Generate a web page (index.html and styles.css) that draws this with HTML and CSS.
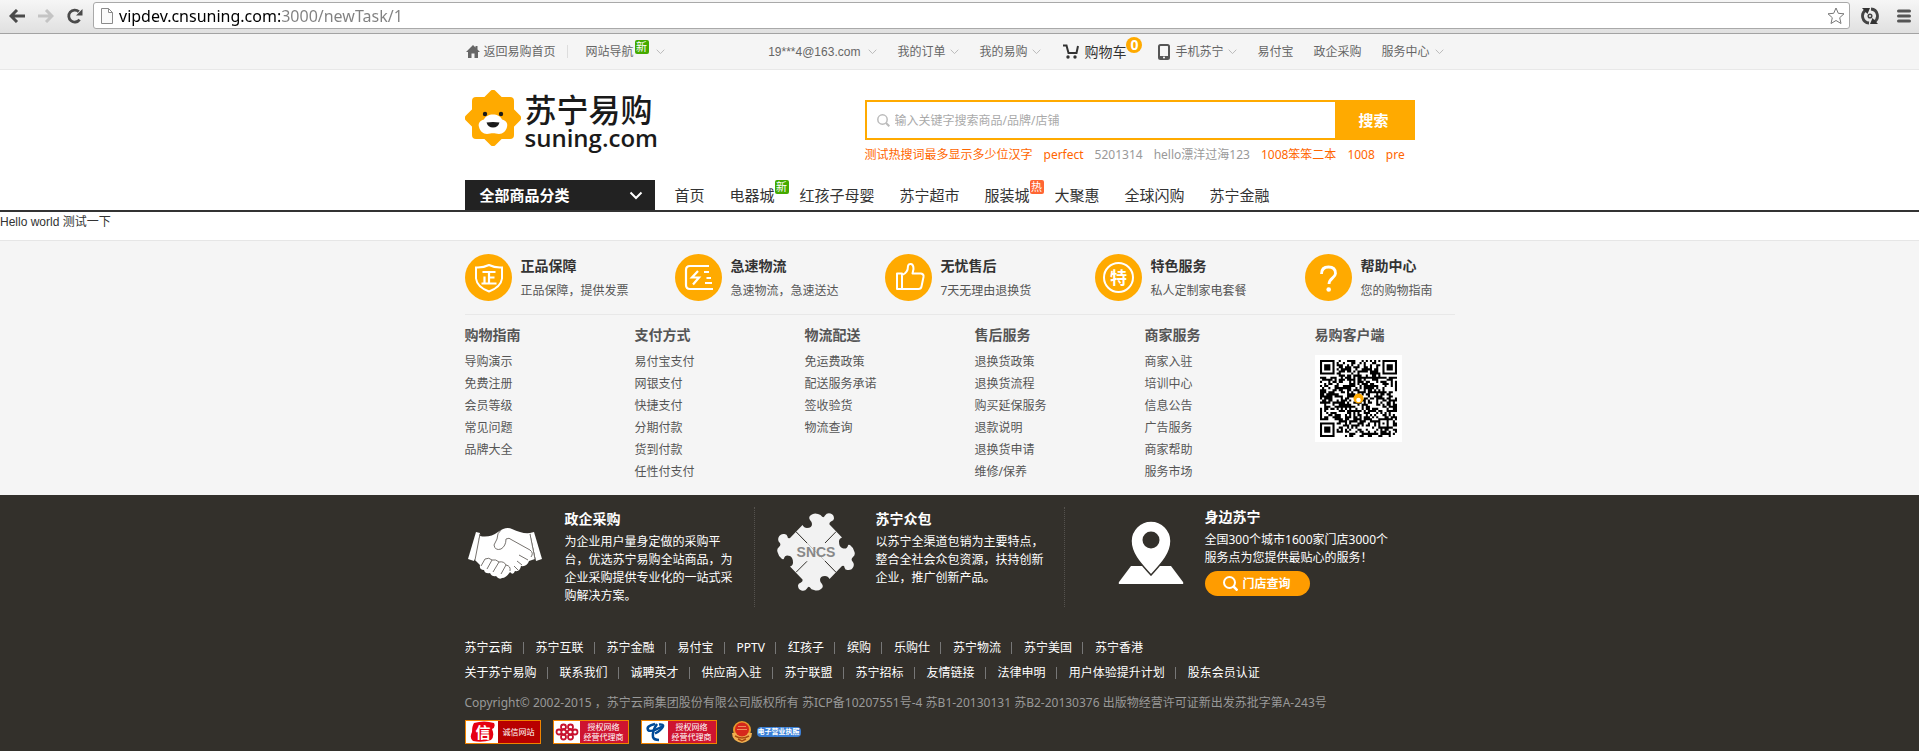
FILE: index.html
```html
<!DOCTYPE html>
<html lang="zh-CN">
<head>
<meta charset="utf-8">
<title>苏宁易购</title>
<link rel="stylesheet" href="styles.css">
</head>
<body>
<svg class="defs" aria-hidden="true">
  <symbol id="chev" viewBox="0 0 9 6"><path d="M.7.7 4.5 4.6 8.3.7" fill="none" stroke="currentColor"/></symbol>
</svg>

<div class="browser">
  <button class="tool" aria-label="后退"><svg width="16" height="14" viewBox="0 0 16 14"><path d="M8 1 2 7l6 6M2 7h14" fill="none" stroke="#4a4a4a" stroke-width="3"/></svg></button>
  <button class="tool" aria-label="前进"><svg width="16" height="14" viewBox="0 0 16 14"><path d="m8 1 6 6-6 6M14 7H0" fill="none" stroke="#c4c4c4" stroke-width="3"/></svg></button>
  <button class="tool" aria-label="刷新"><svg width="16" height="16" viewBox="0 0 16 16"><path d="M12.6 11.6A6 6 0 1 1 11.800 3.600" fill="none" stroke="#4a4a4a" stroke-width="2.800"/><path d="M15.500 1v6.500H9z" fill="#4a4a4a"/></svg></button>
  <div class="address">
    <svg width="12" height="16" viewBox="0 0 12 16"><path d="M.5.5h7l4 4v11H.5zM7.500.5v4h4" fill="#fafafa" stroke="#8a8a8a"/></svg>
    <input class="url" type="text" aria-label="地址" value="vipdev.cnsuning.com:3000/newTask/1">
    <button class="star" aria-label="收藏"><svg width="18" height="18" viewBox="0 0 18 18"><path d="m9 1 2.300 5.300 5.700.5-4.300 3.900 1.300 5.800L9 13.500l-5 3 1.300-5.800L1 6.800l5.700-.5z" fill="#fff" stroke="#777" stroke-linejoin="round"/></svg></button>
  </div>
  <button class="tool" aria-label="扩展"><svg width="18" height="18" viewBox="0 0 18 18"><g fill="none" stroke="#444" stroke-width="2.800"><path d="M8 16A7 7 0 0 1 5 3"/><path d="M10 2a7 7 0 0 1 3 13"/><circle cx="9" cy="9" r="1.800" stroke-width="1.500"/></g><path d="M1 1h8L6.500 7zM17 17H9l2.500-6z" fill="#333"/></svg></button>
  <button class="tool" aria-label="菜单"><svg width="14" height="14" viewBox="0 0 14 14"><path d="M1.500 2h11M1.500 7h11M1.500 12h11" stroke="#555" stroke-width="3" stroke-linecap="round"/></svg></button>
</div>

<div class="topbar">
  <div class="wrap topbar-in">
    <a class="top-item home" href="#"><svg width="14" height="13" viewBox="0 0 14 13"><path d="M7 0 0 7h2v6h3.500V8.500h3V13H12V7h2l-2.500-2.500V1h-2v1.500z" fill="#666"/></svg>返回易购首页</a>
    <a class="top-item site" href="#">网站导航<span class="tag new">新</span><svg class="chev" width="9" height="6"><use href="#chev"/></svg></a>
    <nav class="top-right">
      <a class="top-item mail" href="#">19***4@163.com<svg class="chev" width="9" height="6"><use href="#chev"/></svg></a>
      <a class="top-item" href="#">我的订单<svg class="chev" width="9" height="6"><use href="#chev"/></svg></a>
      <a class="top-item" href="#">我的易购<svg class="chev" width="9" height="6"><use href="#chev"/></svg></a>
      <a class="top-item cart" href="#"><svg width="16" height="15" viewBox="0 0 16 15"><path d="M0 1.500h3.500l2 7.500h8L15 2" fill="none" stroke="#333" stroke-width="2"/><circle cx="5" cy="13" r="1.700" fill="#333"/><circle cx="12" cy="13" r="1.700" fill="#333"/></svg>购物车<span class="count">0</span></a>
      <a class="top-item phone" href="#"><svg width="12" height="16" viewBox="0 0 12 16"><rect x="1" y="1" width="10" height="14" rx="1.500" fill="#f5f5f5" stroke="#555" stroke-width="2"/><path d="M1 12h10v3H1z" fill="#555"/><circle cx="6" cy="13.500" r="1" fill="#fff"/></svg>手机苏宁<svg class="chev" width="9" height="6"><use href="#chev"/></svg></a>
      <a class="top-item" href="#">易付宝</a>
      <a class="top-item" href="#">政企采购</a>
      <a class="top-item" href="#">服务中心<svg class="chev" width="9" height="6"><use href="#chev"/></svg></a>
    </nav>
  </div>
</div>

<header class="header">
  <div class="wrap head-row">
    <a class="logo" href="#">
      <svg width="56" height="56" viewBox="0 0 56 56"><g fill="#fa0"><rect x="7" y="7" width="42" height="42" rx="4"/><rect x="7" y="7" width="42" height="42" rx="4" transform="rotate(45 28 28)"/></g><path d="M28 24.500c4 0 8 2 9 5 4.500 1 6 4.500 5 7.500-1 4-4 7-8 7-2.500 0-4-.7-6-.7s-3.500.7-6 .7c-4 0-7-3-8-7-1-3 .5-6.500 5-7.500 1-3 5-5 9-5z" fill="#fff"/><circle cx="20" cy="24" r="2.200" fill="#1a1a1a"/><circle cx="36" cy="24" r="2.200" fill="#1a1a1a"/><path d="M21.500 32.500q6.500-1 13 0-1.500 5-6.500 5t-6.500-5z" fill="#1a1a1a"/></svg>
      <span class="logo-text"><span class="logo-cn">苏宁易购</span><span class="logo-en">suning.com</span></span>
    </a>
    <div class="search-area">
      <form class="search">
        <svg width="13" height="13" viewBox="0 0 13 13"><circle cx="5.500" cy="5.500" r="4.700" fill="none" stroke="#bbb" stroke-width="1.500"/><path d="m9 9 3.300 3.300" stroke="#bbb" stroke-width="2"/></svg>
        <input type="text" aria-label="搜索" placeholder="输入关键字搜索商品/品牌/店铺">
        <button type="button">搜索</button>
      </form>
      <div class="hot"><a class="on" href="#">测试热搜词最多显示多少位汉字</a><a class="on" href="#">perfect</a><a href="#">5201314</a><a href="#">hello漂洋过海123</a><a class="on" href="#">1008笨笨二本</a><a class="on" href="#">1008</a><a class="on" href="#">pre</a></div>
    </div>
  </div>
  <div class="wrap nav-row">
    <button class="category">全部商品分类<svg width="14" height="9" viewBox="0 0 14 9"><path d="m1.500 1.500 5.500 5.500 5.500-5.500" fill="none" stroke="#fff" stroke-width="2"/></svg></button>
    <nav class="nav">
      <a href="#">首页</a><a href="#">电器城<span class="tag new">新</span></a><a href="#">红孩子母婴</a><a href="#">苏宁超市</a><a href="#">服装城<span class="tag hot-tag">热</span></a><a href="#">大聚惠</a><a href="#">全球闪购</a><a href="#">苏宁金融</a>
    </nav>
  </div>
</header>

<main class="content">Hello world 测试一下</main>

<section class="help">
  <div class="wrap">
    <div class="promises">
      <div class="promise"><svg width="47" height="47" viewBox="0 0 47 47"><circle cx="23.500" cy="23.500" r="23.500" fill="#fa0"/><g fill="none" stroke="#fff" stroke-width="2"><path d="M24 11q-6 3-13 2.500v11Q12 33 24 37.500 36 33 37 24.500v-11Q30 14 24 11z"/><path d="M17.500 18h13M24 18v11.500M24 23.500h5.500M19.500 22.500v7M16.500 29.500h15" stroke-width="2.200"/></g></svg><div class="promise-text"><h3>正品保障</h3><p>正品保障，提供发票</p></div></div>
      <div class="promise"><svg width="47" height="47" viewBox="0 0 47 47"><circle cx="23.500" cy="23.500" r="23.500" fill="#fa0"/><g fill="none" stroke="#fff" stroke-width="2.200"><path d="M34 12H15q-4 0-4 4v15q0 4 4 4h23M29 18h5M31.500 24H36M30 29h7"/><path d="m23 17-6 6.500h7l-6 7"/></g></svg><div class="promise-text"><h3>急速物流</h3><p>急速物流，急速送达</p></div></div>
      <div class="promise"><svg width="47" height="47" viewBox="0 0 47 47"><circle cx="23.500" cy="23.500" r="23.500" fill="#fa0"/><g fill="none" stroke="#fff" stroke-width="2" stroke-linejoin="round"><path d="M12 19.500h5V35h-5zM17 21q6-2 6-9 .5-2.500 3-2t2.500 5l-1 4.500H36q3 .5 2.500 3.500l-2 9.500q-.5 2.500-3 2.500H17"/></g></svg><div class="promise-text"><h3>无忧售后</h3><p>7天无理由退换货</p></div></div>
      <div class="promise"><svg width="47" height="47" viewBox="0 0 47 47"><circle cx="23.500" cy="23.500" r="23.500" fill="#fa0"/><circle cx="23.500" cy="23.500" r="14.500" fill="none" stroke="#fff" stroke-width="2"/><text class="te" x="23.500" y="30" text-anchor="middle">特</text></svg><div class="promise-text"><h3>特色服务</h3><p>私人定制家电套餐</p></div></div>
      <div class="promise"><svg width="47" height="47" viewBox="0 0 47 47"><circle cx="23.500" cy="23.500" r="23.500" fill="#fa0"/><path d="M16.500 20q0-7 7-7t7 6.500c0 4-6.500 5-6.500 10.500" fill="none" stroke="#fff" stroke-width="2.800"/><circle cx="23.700" cy="35.500" r="2.300" fill="#fff"/></svg><div class="promise-text"><h3>帮助中心</h3><p>您的购物指南</p></div></div>
    </div>
    <div class="guides">
      <div><h4>购物指南</h4><a href="#">导购演示</a><a href="#">免费注册</a><a href="#">会员等级</a><a href="#">常见问题</a><a href="#">品牌大全</a></div>
      <div><h4>支付方式</h4><a href="#">易付宝支付</a><a href="#">网银支付</a><a href="#">快捷支付</a><a href="#">分期付款</a><a href="#">货到付款</a><a href="#">任性付支付</a></div>
      <div><h4>物流配送</h4><a href="#">免运费政策</a><a href="#">配送服务承诺</a><a href="#">签收验货</a><a href="#">物流查询</a></div>
      <div><h4>售后服务</h4><a href="#">退换货政策</a><a href="#">退换货流程</a><a href="#">购买延保服务</a><a href="#">退款说明</a><a href="#">退换货申请</a><a href="#">维修/保养</a></div>
      <div><h4>商家服务</h4><a href="#">商家入驻</a><a href="#">培训中心</a><a href="#">信息公告</a><a href="#">广告服务</a><a href="#">商家帮助</a><a href="#">服务市场</a></div>
      <div><h4>易购客户端</h4><svg class="qr" width="87" height="87" viewBox="-2.400 -2.400 41.800 41.800" role="img" aria-label="二维码"><path id="qr-modules"/><circle cx="18.500" cy="18.500" r="2.400" fill="#fa0"/><circle cx="18.500" cy="19.200" r="1.100" fill="#fff"/></svg></div>
    </div>
  </div>
</section>

<footer class="footer">
  <div class="wrap">
    <div class="intros">
      <section class="intro">
        <svg class="hands" width="74" height="52" viewBox="0 0 74 52">
          <g fill="#fff"><path d="M8 5 12 6 6 34 0 32z"/><path d="m66 5-4 1 6 28 6-2z"/><path d="M12 9q10 2 18-4 8-6 14-3 10 5 18 4l5 26-6 2q-2 6-8 5-1 6-6 5-2 5-5 1-4 6-8 6-3 2-6-2-4 1-6-3-5 1-6-3-5 0-4-5l-6-6-4-1z"/></g>
          <g fill="none" stroke="#77736f"><path d="m12 7-5 26M62 7l5 25"/><path d="M33 3q-4 3-4 9l-3 6q1 6 7 4 5-3 5-10 3-2 6 1l18 10q4 3 1 7M51 28l9 5M49 34l5 4M46 39l4 4"/><path d="m17 32-4 7M24 33l-5 9M31 35l-6 10M38 38l-5 9M17 32q4-2 7 1 4-1 7 2 5-1 7 3 5 1 4 6"/></g>
        </svg>
        <div class="intro-text"><h3>政企采购</h3><p>为企业用户量身定做的采购平台，优选苏宁易购全站商品，为企业采购提供专业化的一站式采购解决方案。</p></div>
      </section>
      <section class="intro">
        <svg class="puzzle" width="78" height="78" viewBox="0 0 78 78">
          <path id="puzzle-half" d="M19 18.700 25.500 12q1.500 3 4.500 3 5 0 5-4 0-2-2-4-2-3 1-5 3-2.500 7-1 3 .5 4 2.500 1.500 2 3-1 2-3 5.500-2 3.500 1 3.500 5 0 2-3 3-2 1-1.500 3L65 24.500q-3 1-3 4 0 5 3 6.500 5 2 6-2.500 0-1 2-.5 3.500 2.500 4.500 7 1 3-1.500 5-2.500 2-.5 4.500 2 2 1 5-1.500 4-6 3.500-2.500 0-3-2.500 0-2.500-2.500-1.500l-6 6.300z" fill="#f2f2f2"/>
          <use href="#puzzle-half" transform="rotate(180 39 39)"/>
          <path d="M19 18.700 30 30M59 18.700 48 30M19 59.300l11-11M59 59.300 48 48" stroke="#33302b"/>
          <text class="sncs" x="39" y="44" text-anchor="middle">SNCS</text>
        </svg>
        <div class="intro-text"><h3>苏宁众包</h3><p>以苏宁全渠道包销为主要特点，整合全社会众包资源，扶持创新企业，推广创新产品。</p></div>
      </section>
      <section class="intro store">
        <svg class="pin" width="66" height="64" viewBox="0 0 66 64"><path d="M13 45h40l12 16q1 2-1 2H2q-2 0-1-2z" fill="#fff"/><path d="M33 0a20 20 0 0 1 20 20c0 14-12 25-20 34C25 45 13 34 13 20A20 20 0 0 1 33 0z" fill="#fff" stroke="#33302b" stroke-width="1.500"/><circle cx="33" cy="19" r="8.500" fill="#33302b"/></svg>
        <div class="intro-text"><h3>身边苏宁</h3><p>全国300个城市1600家门店3000个服务点为您提供最贴心的服务！</p><a class="find" href="#"><svg width="15" height="15" viewBox="0 0 15 15"><circle cx="6.500" cy="6.500" r="5.500" fill="none" stroke="#fff" stroke-width="2"/><path d="m10.500 10.500 4 4" stroke="#fff" stroke-width="2.500"/></svg>门店查询</a></div>
      </section>
    </div>
    <nav class="links"><a href="#">苏宁云商</a><a href="#">苏宁互联</a><a href="#">苏宁金融</a><a href="#">易付宝</a><a href="#">PPTV</a><a href="#">红孩子</a><a href="#">缤购</a><a href="#">乐购仕</a><a href="#">苏宁物流</a><a href="#">苏宁美国</a><a href="#">苏宁香港</a></nav>
    <nav class="links"><a href="#">关于苏宁易购</a><a href="#">联系我们</a><a href="#">诚聘英才</a><a href="#">供应商入驻</a><a href="#">苏宁联盟</a><a href="#">苏宁招标</a><a href="#">友情链接</a><a href="#">法律申明</a><a href="#">用户体验提升计划</a><a href="#">股东会员认证</a></nav>
    <p class="copyright">Copyright© 2002-2015 ，苏宁云商集团股份有限公司版权所有 苏ICP备10207551号-4 苏B1-20130131 苏B2-20130376 出版物经营许可证新出发苏批字第A-243号</p>
    <div class="certs">
      <a class="cert trust" href="#"><span class="mark"><svg width="32" height="22" viewBox="0 0 32 22"><path d="M8 2q10-3 20 0 2 4-2 6 3 7-1 11-9 3-18 1-4-3-1-9 0-6 2-9z" fill="#e60012"/><text class="xin" x="17" y="17" text-anchor="middle">信</text></svg></span><span class="cert-text">诚信网站</span></a>
      <a class="cert" href="#"><span class="mark"><svg width="26" height="22" viewBox="0 0 26 22"><g fill="none" stroke="#c8102e" stroke-width="1.800"><circle cx="5" cy="11" r="2.500"/><circle cx="21" cy="11" r="2.500"/><circle cx="9.500" cy="6" r="2.500"/><circle cx="16.500" cy="6" r="2.500"/><circle cx="9.500" cy="16" r="2.500"/><circle cx="16.500" cy="16" r="2.500"/><path d="m7 10 3-2 6 6 3-2M7 12l3 2 6-6 3 2"/></g></svg></span><span class="cert-text">授权网络<br>经营代理商</span></a>
      <a class="cert" href="#"><span class="mark"><svg width="26" height="22" viewBox="0 0 26 22"><g fill="none" stroke="#004a97" stroke-width="2.500"><path d="M13 3Q4 5 6 9q3 3 15-4"/><path d="M15 3q-5 7-4 13 1 3 6 3"/><path d="M17 3.500q5-.5 4 2-2 4-8 7"/></g></svg></span><span class="cert-text">授权网络<br>经营代理商</span></a>
      <a class="license" href="#"><svg width="20" height="22" viewBox="0 0 20 22"><circle cx="10" cy="9" r="9" fill="#e89a2c"/><path d="M0 12q0 8 10 10 10-2 10-10z" fill="#f0b050"/><circle cx="10" cy="8.500" r="7" fill="#d6281c"/><path d="M6 5.500h8M5 8.500h10" stroke="#f08c5a"/><path d="M3 15q7 4 14 0M6 18l4 2 4-2" stroke="#a84a12" stroke-width="1.500" fill="none"/></svg><span>电子营业执照</span></a>
    </div>
  </div>
</footer>
<script src="qr.js"></script>
</body>
</html>
```

FILE: qr.js
```js
// Fills the 37x37 code grid: three finder squares, one alignment square, data modules.
(function () {
  var size = 37;
  var seed = 20151;
  var d = '';
  function finder(x, y) {
    var centres = [[3, 3], [size - 4, 3], [3, size - 4]];
    for (var i = 0; i < 3; i++) {
      var dist = Math.max(Math.abs(x - centres[i][0]), Math.abs(y - centres[i][1]));
      if (dist <= 4) return dist <= 1 || dist === 3;
    }
    return null;
  }
  for (var y = 0; y < size; y++) {
    for (var x = 0; x < size; x++) {
      seed = (seed * 1103515 + 12345) % 2147483648;
      var on = finder(x, y);
      if (on === null) {
        var a = Math.max(Math.abs(x - 30), Math.abs(y - 30));
        on = a <= 2 ? a !== 1 : ((seed >> 16) & 15) < 9;
      }
      if (on) d += 'M' + x + ' ' + y + 'h1v1h-1z';
    }
  }
  document.getElementById('qr-modules').setAttribute('d', d);
})();
```

FILE: styles.css
```css
* { box-sizing: border-box; }
body {
  margin: 0;
  font: 12px/18px "Noto Sans", "Noto Sans CJK SC", sans-serif;
  color: #333;
  background: #fff;
}
h3, h4, p { margin: 0; }
a { color: inherit; text-decoration: none; }
button, input { font: inherit; color: inherit; border: 0; padding: 0; background: none; }
svg { display: block; flex: none; }
.defs { position: absolute; width: 0; height: 0; }
.wrap { width: 990px; max-width: 100%; margin: 0 auto; }

/* browser chrome */
.browser {
  display: flex;
  align-items: center;
  gap: 13px;
  height: 34px;
  padding: 0 8px 2px 9px;
  background: linear-gradient(#f6f6f6, #e0e0e0);
  border-bottom: 1px solid #a3a3a3;
}
.address {
  flex: 1;
  display: flex;
  align-items: center;
  gap: 6px;
  height: 27px;
  margin: 0 -2px 0 -3px;
  padding: 0 4px 0 7px;
  background: #fff;
  border: 1px solid #a9a9a9;
  border-radius: 3px;
}
.tool:last-child { margin-left: 5px; }
.url {
  flex: 1;
  font-size: 16px;
  line-height: 24px;
  color: transparent;
  background: linear-gradient(to right, #000 161px, #808080 161px);
  -webkit-background-clip: text;
  background-clip: text;
}

/* top bar */
.topbar { background: #f5f5f5; border-bottom: 1px solid #e8e8e8; color: #666; }
.topbar-in { display: flex; height: 35px; align-items: center; padding: 0 11px 0 1px; }
.top-item { display: flex; align-items: center; gap: 5px; white-space: nowrap; }
.chev { color: #bbb; }
.home { gap: 4px; padding-right: 11px; border-right: 1px solid #ddd; line-height: 12px; }
.site { margin-left: 18px; gap: 1px; }
.site .chev { margin-left: 6px; }
.site .tag { margin-bottom: 10px; }
.tag {
  width: 14px;
  height: 14px;
  border-radius: 2px;
  font-size: 11px;
  line-height: 14px;
  text-align: center;
  color: #fff;
}
.new { background: #4a0; }
.hot-tag { background: #f63; }
.top-right { display: flex; gap: 20px; margin-left: auto; }
.mail { font-family: "Liberation Sans", sans-serif; gap: 8px; }
.cart { font-size: 14px; color: #333; margin-left: 2px; }
.count {
  width: 16px;
  height: 16px;
  margin: 0 -4px 14px -5px;
  border-radius: 8px;
  background: #fa0;
  color: #fff;
  font-weight: bold;
  line-height: 16px;
  text-align: center;
}

/* header */
.header { border-bottom: 2px solid #333; }
.head-row { display: flex; justify-content: space-between; padding: 20px 40px 0 0; height: 110px; }
.logo { display: flex; gap: 4px; height: 60px; color: #1a1a1a; }
.logo-text { display: flex; flex-direction: column; }
.logo-cn { font-size: 32px; line-height: 36px; font-weight: 500; padding-top: 2px; }
.logo-en { font: 600 24px/20px "Open Sans", sans-serif; }
.search-area { width: 550px; padding-top: 10px; }
.search { display: flex; align-items: center; gap: 5px; height: 40px; padding-left: 10px; border: 2px solid #fa0; }
.search input { flex: 1; height: 34px; }
.search input::placeholder { color: #aaa; opacity: 1; }
.search button { width: 78px; height: 36px; background: #fa0; color: #fff; font-size: 15px; font-weight: bold; }
.hot { display: flex; gap: 11px; padding-top: 6px; color: #999; white-space: nowrap; }
.on { color: #f60; }
.nav-row { display: flex; }
.category {
  display: flex;
  align-items: center;
  justify-content: space-between;
  width: 190px;
  height: 30px;
  padding: 0 12px 0 15px;
  background: #222;
  color: #fff;
  font-size: 15px;
  font-weight: bold;
}
.nav { display: flex; gap: 25px; padding-left: 20px; font-size: 15px; line-height: 30px; white-space: nowrap; }
.nav a { position: relative; }
.nav .tag { position: absolute; left: 100%; top: 0; }

.content { height: 28px; font-family: "Liberation Sans", "Noto Sans CJK SC", sans-serif; line-height: 20px; }

/* help */
.help { background: #f5f5f5; border-top: 1px solid #e6e6e6; color: #555; }
.promises { display: grid; grid-template-columns: repeat(4, 210px) 1fr; padding: 13px 0 9px; border-bottom: 1px solid #e8e8e8; }
.promise { display: flex; gap: 9px; white-space: nowrap; }
.promise-text { padding-top: 1px; }
.promise h3 { font-size: 14px; line-height: 22px; color: #333; }
.promise p { line-height: 28px; }
.te { font: bold 17px "Noto Sans CJK SC", sans-serif; fill: #fff; }
.guides { display: grid; grid-template-columns: repeat(5, 170px) 1fr; padding: 10px 0 12px; }
.guides h4 { font-size: 14px; line-height: 20px; margin-bottom: 6px; }
.guides a { display: block; line-height: 22px; }
.qr { background: #fff; margin-top: 10px; }

/* footer */
.footer { background: #33302b; color: #fff; padding: 12px 0 8px; }
.intros { display: grid; grid-template-columns: 290px 310px 1fr; }
.intro { display: flex; height: 100px; border-right: 1px dotted #55524e; }
.intro + .intro { padding-left: 21px; }
.intro h3 { font-size: 14px; line-height: 20px; margin-bottom: 4px; }
.intro-text { width: 170px; padding-top: 2px; }
.hands { margin: 20px 23px 0 3px; }
.puzzle { margin: 6px 21px 0 1px; }
.intro.store { border: 0; padding-left: 53px; }
.store .intro-text { width: 190px; padding-top: 0; }
.pin { margin: 14px 21px 0 0; }
.sncs { font: bold 14px "Liberation Sans", sans-serif; fill: #888; }
.find {
  display: flex;
  align-items: center;
  justify-content: center;
  gap: 4px;
  width: 105px;
  height: 25px;
  margin-top: 4px;
  border-radius: 13px;
  background: #ff9c00;
  font-weight: bold;
}
.links { display: flex; line-height: 25px; }
.intros + .links { padding-top: 28px; }
.links a { display: flex; align-items: center; }
.links a + a::before { content: ""; width: 1px; height: 12px; margin: 0 12px 0 10px; background: #777; }
.copyright { color: #999; line-height: 20px; padding: 8px 0 7px; }
.certs { display: flex; gap: 12px; }
.cert { display: flex; width: 76px; height: 24px; border: 1px solid #f08300; background: #ce1430; }
.mark { background: #fff; }
.cert-text { flex: 1; font-size: 8px; line-height: 10px; text-align: center; align-self: center; white-space: nowrap; }
.trust { background: #b80000; }
.xin { font: bold 15px "Noto Sans CJK SC", sans-serif; fill: #fff; }
.license { display: flex; align-items: center; gap: 5px; margin-left: 3px; }
.license span { padding: 0 1px; border-radius: 4px; background: #3b7fd6; font-size: 7px; line-height: 10px; font-weight: bold; }
```
